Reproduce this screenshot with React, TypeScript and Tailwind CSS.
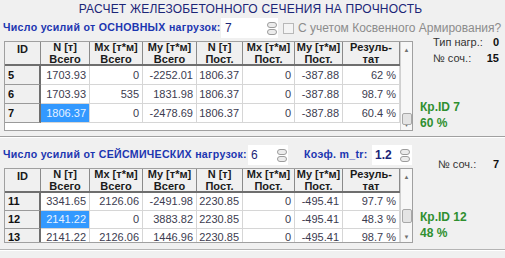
import React from "react";

type Row = { id: string; cells: string[]; sel?: number };

const colW = [
  "w-[49px]",
  "w-[53px]",
  "w-[54px]",
  "w-[46px]",
  "w-[52px]",
  "w-[48px]",
  "w-[57px]",
];

const heads: [string, string][] = [
  ["N [т]", "Всего"],
  ["Mx [т*м]", "Всего"],
  ["My [т*м]", "Всего"],
  ["N [т]", "Пост."],
  ["Mx [т*м]", "Пост."],
  ["My [т*м]", "Пост."],
  ["Резуль-", "тат"],
];

function Spinner() {
  return (
    <div className="flex flex-col gap-[1px]">
      <div className="w-[10px] h-[6px] rounded-[3px] border border-[#9c9c9c] bg-[#ececec]" />
      <div className="w-[10px] h-[6px] rounded-[3px] border border-[#9c9c9c] bg-[#ececec]" />
    </div>
  );
}

function Table({
  rows,
  rowH,
  height,
  thumbTop,
  thumbH,
}: {
  rows: Row[];
  rowH: string;
  height: string;
  thumbTop: string;
  thumbH: string;
}) {
  return (
    <div className={`flex w-[409px] ${height} border border-[#a0a0a0] bg-white overflow-hidden`}>
      <div className="flex flex-col w-[395px]">
        <div className="flex h-[24px] shrink-0 bg-[#f0f0f0] border-b-2 border-b-[#6e6e6e] text-[11px] leading-[11px] font-bold text-[#1a1a1a]">
          <div className="w-[36px] border-r border-r-[#8a8a8a] flex justify-center pt-[2px]">ID</div>
          {heads.map((h, i) => (
            <div
              key={i}
              className={`${colW[i]} border-r border-r-[#8a8a8a] flex flex-col items-center justify-center gap-[1px]`}
            >
              <span>{h[0]}</span>
              <span>{h[1]}</span>
            </div>
          ))}
        </div>
        {rows.map((r) => (
          <div key={r.id} className={`flex ${rowH} shrink-0 text-[11px]`}>
            <div className="w-[36px] bg-[#f0f0f0] border-r-2 border-r-[#6e6e6e] border-b border-b-[#9a9a9a] font-bold text-[#111] pl-[3px] flex items-center">
              {r.id}
            </div>
            {r.cells.map((c, i) => (
              <div
                key={i}
                className={`${colW[i]} border-r border-b border-[#d6d6d6] flex items-center justify-end pr-[3px] ${
                  r.sel === i ? "bg-[#3399ff] text-[#e8f2ff]" : "text-[#3c3c50]"
                }`}
              >
                {c}
              </div>
            ))}
          </div>
        ))}
      </div>
      <div className="relative w-[13px] border-l border-[#d0d0d0] bg-[#f7f7f7] flex flex-col items-center justify-between">
        <span className="text-[6px] leading-[6px] text-[#707070] mt-[5px]">▲</span>
        <div className={`absolute left-[1px] ${thumbTop} ${thumbH} w-[10px] rounded-[2px] border border-[#a8a8a8] bg-[#e4e4e4]`} />
        <span className="text-[6px] leading-[6px] text-[#707070] mb-[2px]">▼</span>
      </div>
    </div>
  );
}

export default function App() {
  const top: Row[] = [
    { id: "5", cells: ["1703.93", "0", "-2252.01", "1806.37", "0", "-387.88", "62 %"] },
    { id: "6", cells: ["1703.93", "535", "1831.98", "1806.37", "0", "-387.88", "98.7 %"] },
    { id: "7", cells: ["1806.37", "0", "-2478.69", "1806.37", "0", "-387.88", "60.4 %"], sel: 0 },
  ];
  const bottom: Row[] = [
    { id: "11", cells: ["3341.65", "2126.06", "-2491.98", "2230.85", "0", "-495.41", "97.7 %"] },
    { id: "12", cells: ["2141.22", "0", "3883.82", "2230.85", "0", "-495.41", "48.3 %"], sel: 0 },
    { id: "13", cells: ["2141.22", "2126.06", "1446.96", "2230.85", "0", "-495.41", "98.7 %"] },
  ];

  return (
    <div className="w-[505px] h-[258px] bg-[#f0f0f0] overflow-hidden font-['Liberation_Sans',Arial,sans-serif]">
      {/* Title */}
      <div className="h-[18px] flex items-center justify-center pr-[4px] text-[12px] text-[#1b2577] tracking-[0.2px]">
        РАСЧЕТ ЖЕЛЕЗОБЕТОННОГО СЕЧЕНИЯ НА ПРОЧНОСТЬ
      </div>

      {/* Row 2 */}
      <div className="h-[20px] flex items-center">
        <span className="pl-[3px] w-[221px] shrink-0 text-[10.6px] tracking-[0.3px] font-bold text-[#1c36b0] whitespace-nowrap">
          Число усилий от ОСНОВНЫХ нагрузок:
        </span>
        <div className="w-[57px] h-[20px] bg-white flex items-center justify-between pl-[4px] pr-[1px]">
          <span className="text-[12px] text-[#1b2577]">7</span>
          <Spinner />
        </div>
        <div className="ml-[5px] w-[11px] h-[11px] border border-[#b8b8b8] bg-[#f4f4f4]" />
        <span className="ml-[4px] text-[12px] text-[#8c8c8c] whitespace-nowrap">
          С учетом Косвенного Армирования?
        </span>
      </div>

      {/* Top section */}
      <div className="flex items-start">
        <div className="ml-[4px] mt-[3px]">
          <Table rows={top} rowH="h-[19px]" height="h-[90px]" thumbTop="top-[71px]" thumbH="h-[12px]" />
        </div>
        <div className="ml-[7px] -mt-[3px] flex flex-col text-[11px] text-[#333]">
          <div className="h-[14px] flex items-center pl-[13px] w-[79px]">
            <span className="flex-1">Тип нагр.:</span>
            <span className="font-bold text-[#111]">0</span>
          </div>
          <div className="mt-[2px] h-[14px] flex items-center pl-[13px] w-[79px]">
            <span className="flex-1">№ соч.:</span>
            <span className="font-bold text-[#111]">15</span>
          </div>
          <div className="mt-[35px] h-[14px] flex items-center text-[12px] font-bold text-[#2f8f2f]">Кр.ID 7</div>
          <div className="mt-[2px] h-[14px] flex items-center text-[12px] font-bold text-[#2f8f2f]">60 %</div>
        </div>
      </div>

      {/* Divider */}
      <div className="mt-[5px] h-[2px] border-t border-t-[#a0a0a0] border-b border-b-white" />

      {/* Bottom section */}
      <div className="flex items-start">
        <div className="flex flex-col w-[415px]">
          <div className="mt-[7px] h-[20px] flex items-center">
            <span className="pl-[3px] w-[248px] shrink-0 text-[10.6px] tracking-[0.3px] font-bold text-[#1c36b0] whitespace-nowrap">
              Число усилий от СЕЙСМИЧЕСКИХ нагрузок:
            </span>
            <div className="w-[40px] h-[20px] bg-white flex items-center justify-between pl-[3px] pr-[1px]">
              <span className="text-[12px] text-[#1b2577]">6</span>
              <Spinner />
            </div>
            <span className="ml-[16px] w-[68px] shrink-0 text-[10.6px] tracking-[0.3px] font-bold text-[#1c36b0] whitespace-nowrap">
              Коэф. m_tr:
            </span>
            <div className="w-[40px] h-[20px] bg-white flex items-center justify-between pl-[3px] pr-[2px]">
              <span className="text-[12px] font-bold text-[#1b2577]">1.2</span>
              <Spinner />
            </div>
          </div>
          <div className="ml-[4px] mt-[3px]">
            <Table rows={bottom} rowH="h-[18px]" height="h-[75px]" thumbTop="top-[40px]" thumbH="h-[14px]" />
          </div>
        </div>
        <div className="ml-[5px] flex flex-col text-[11px] text-[#333]">
          <div className="mt-[19px] h-[14px] flex items-center pl-[18px] w-[79px]">
            <span className="flex-1">№ соч.:</span>
            <span className="font-bold text-[#111]">7</span>
          </div>
          <div className="mt-[39px] h-[14px] flex items-center text-[12px] font-bold text-[#2f8f2f]">Кр.ID 12</div>
          <div className="mt-[2px] h-[14px] flex items-center text-[12px] font-bold text-[#2f8f2f]">48 %</div>
        </div>
      </div>

      <div className="mt-[6px] h-[2px] border-t border-t-[#b4b4b4] border-b border-b-white" />
    </div>
  );
}
